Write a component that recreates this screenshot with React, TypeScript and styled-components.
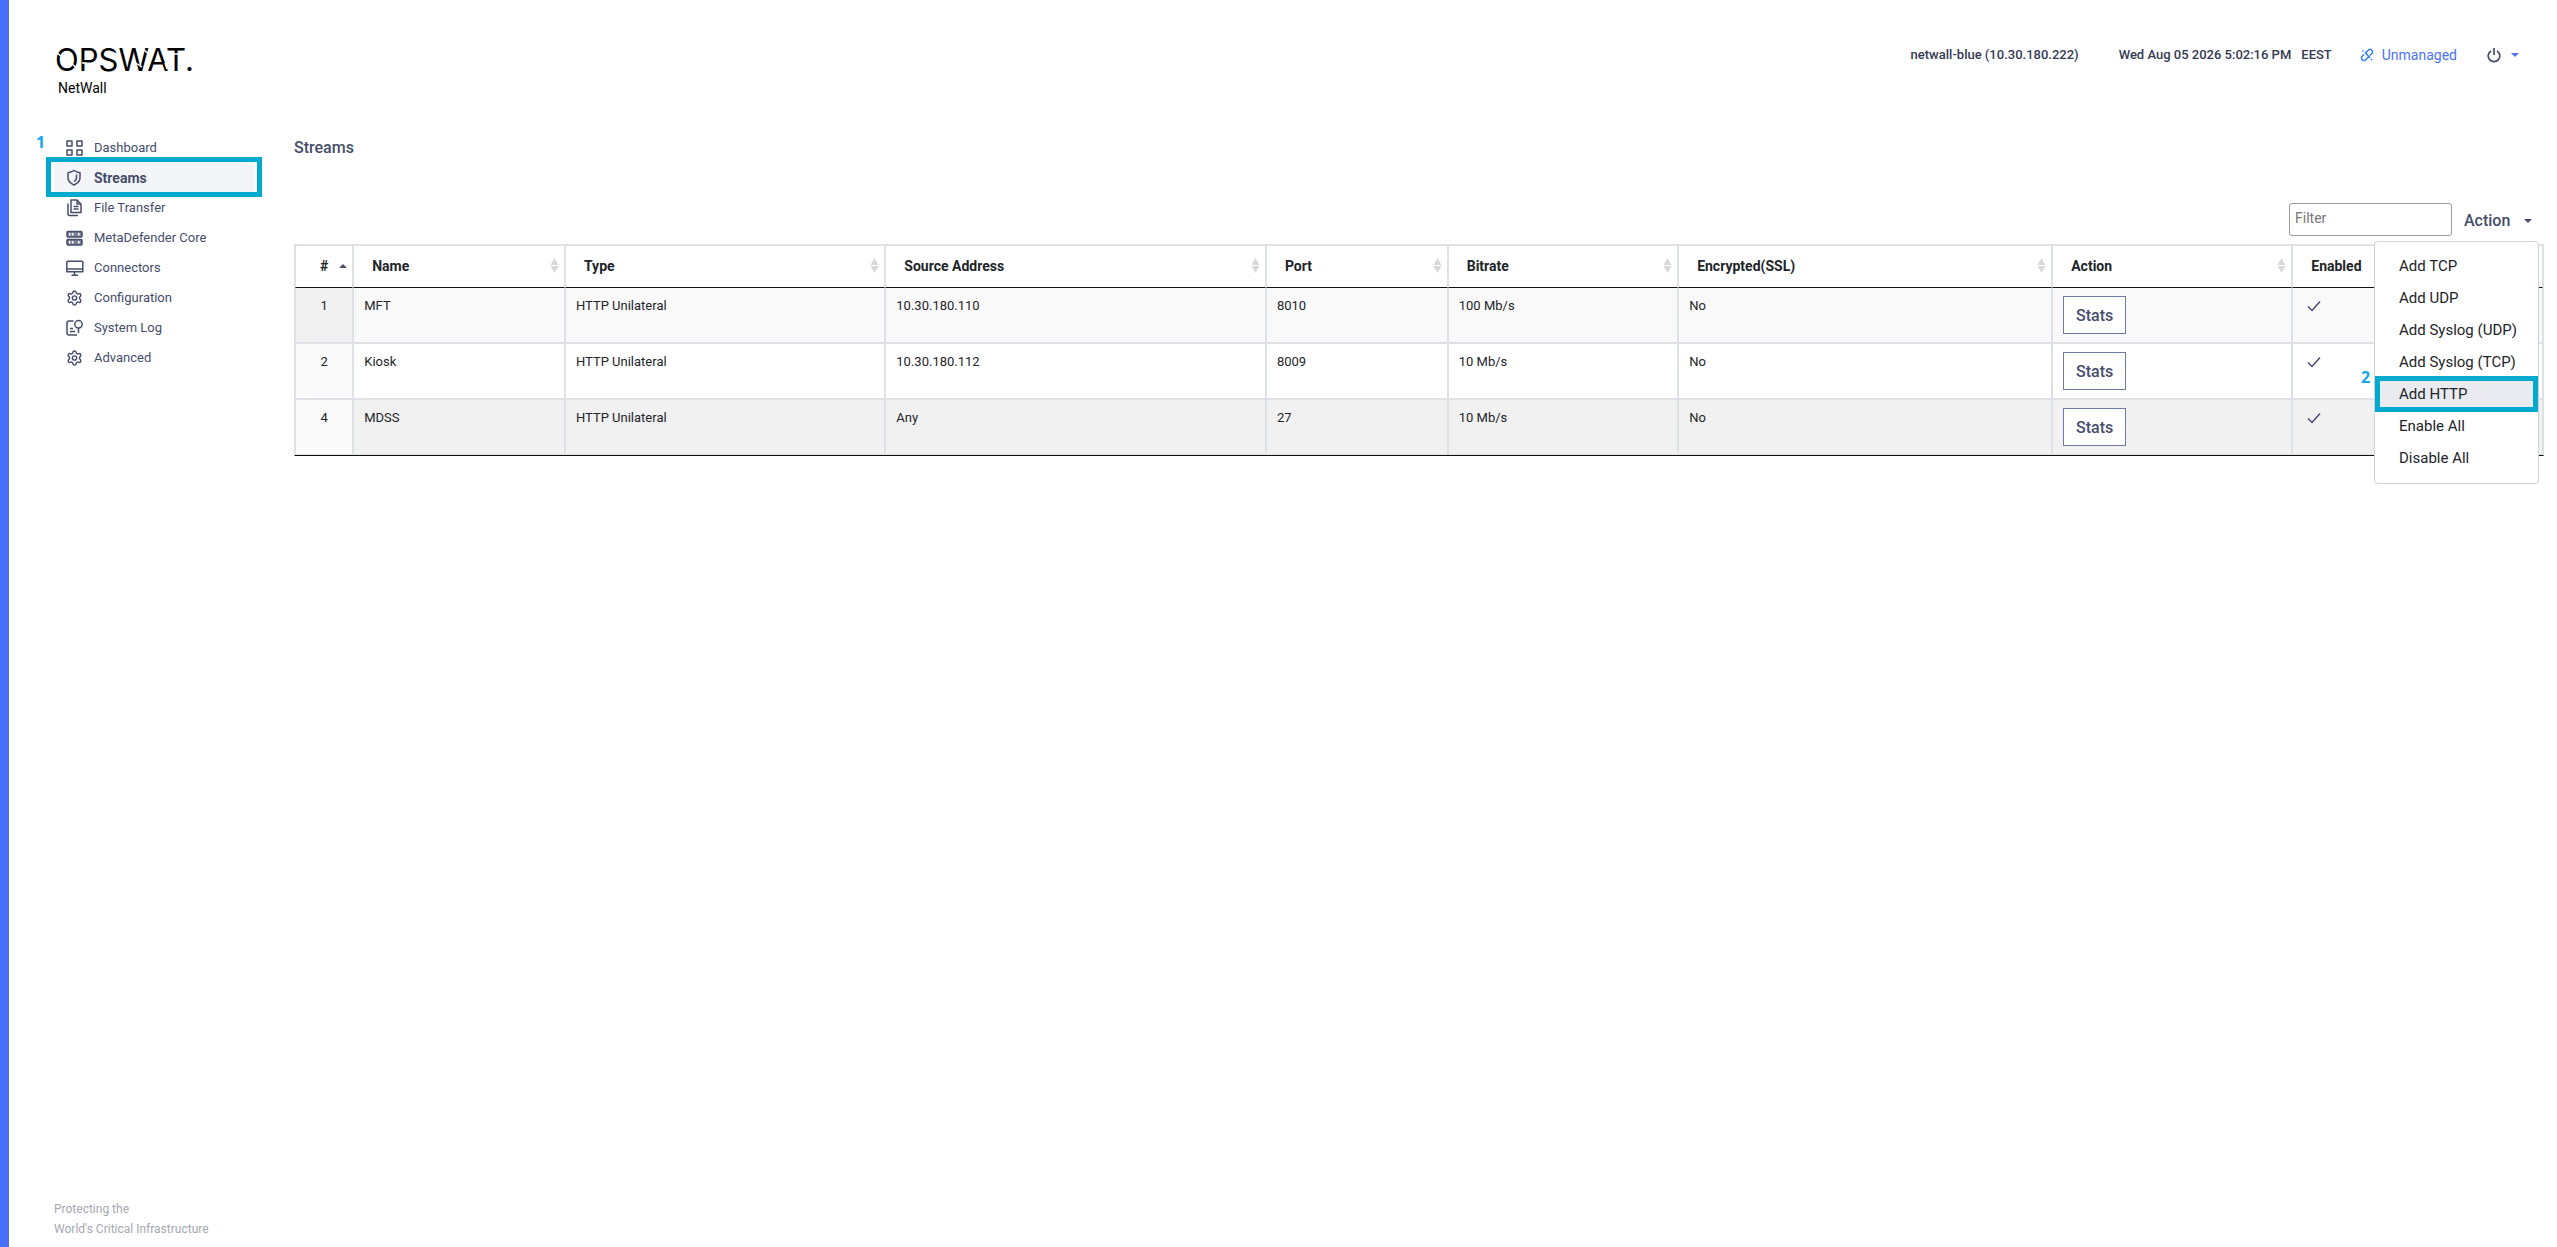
import React from "react";
import styled, { createGlobalStyle } from "styled-components";
import { Settings } from "lucide-react";

const GlobalStyle = createGlobalStyle`
  *, *::before, *::after { box-sizing: border-box; }
  body {
    margin: 0;
    background: #fff;
    color: #212529;
    font-family: Roboto, "Liberation Sans", sans-serif;
    font-size: 13px;
    line-height: 20px;
  }
  button, input { font-family: inherit; }
  ul { list-style: none; margin: 0; padding: 0; }
`;

const ink = "#454d6b";
const callout = "#00a9ce";
const grid = "#dee2e6";

const Page = styled.div`
  display: flex;
  flex-direction: column;
  min-height: 100vh;
  border-left: 9px solid #486ff6;
`;

const Header = styled.header`
  display: flex;
  justify-content: space-between;
  align-items: flex-start;
  padding: 41px 38px 0 45px;
  height: 132px;
`;

const Brand = styled.div`
  display: flex;
  flex-direction: column;
  color: #000;
`;

const Product = styled.span`
  padding-left: 4px;
  font-size: 14px;
`;

const Status = styled.div`
  display: flex;
  align-items: center;
  margin-top: 4px;
  color: #343b54;
  font-weight: 500;
`;

const Host = styled.span`
  margin-right: 40px;
`;

const Zone = styled.span`
  margin: 0 28px 0 10px;
`;

const ManagedLink = styled.a`
  display: flex;
  align-items: center;
  gap: 8px;
  margin-right: 30px;
  color: #4a73f3;
  font-size: 14px;
  font-weight: 400;
  text-decoration: none;
`;

const PowerButton = styled.button`
  display: flex;
  align-items: center;
  gap: 10px;
  padding: 0;
  border: 0;
  background: none;
  color: ${ink};
`;

const Columns = styled.div`
  display: flex;
  flex: 1;
`;

const Sidebar = styled.aside`
  display: flex;
  flex-direction: column;
  justify-content: space-between;
  width: 200px;
  margin: 0 40px 0 45px;
  flex: none;
`;

const NavItem = styled.li`
  position: relative;
`;

const NavLink = styled.a<{ $active?: boolean }>`
  display: flex;
  align-items: center;
  gap: 10px;
  height: 30px;
  padding: 1px 0 0 12px;
  color: ${ink};
  background: ${(p) => (p.$active ? "#f4f5f9" : "none")};
  font-size: ${(p) => (p.$active ? 14 : 13)}px;
  font-weight: ${(p) => (p.$active ? 700 : 400)};
  text-decoration: none;
`;

const Highlight = styled.span<{ $x: number; $y: number }>`
  position: absolute;
  inset: ${(p) => `${-p.$y}px ${-p.$x}px`};
  border: 5px solid ${callout};
  pointer-events: none;
`;

const Marker = styled.span<{ $left: number; $top: number }>`
  position: absolute;
  left: ${(p) => p.$left}px;
  top: ${(p) => p.$top}px;
  color: #12a6ee;
  font: 700 16px/20px "Noto Sans", sans-serif;
`;

const Footer = styled.footer`
  padding-bottom: 8px;
  color: #a5a7b2;
  font-size: 12px;
  white-space: nowrap;
`;

const Main = styled.main`
  flex: 1;
  min-width: 0;
  padding-right: 13px;
`;

const Title = styled.h1`
  margin: 6px 0 45px;
  color: ${ink};
  font-size: 16px;
  line-height: 20px;
  font-weight: 500;
`;

const Toolbar = styled.div`
  display: flex;
  justify-content: flex-end;
  align-items: center;
  gap: 12px;
  height: 33px;
  margin-bottom: 8px;
`;

const Filter = styled.input`
  width: 163px;
  height: 33px;
  padding: 0 5px 3px;
  border: 1px solid #9b9b9b;
  border-radius: 3px;
  font-size: 14px;
  &::placeholder { color: #777; opacity: 1; }
`;

const MenuHolder = styled.div`
  position: relative;
  width: 80px;
`;

const MenuButton = styled.button`
  display: flex;
  align-items: center;
  gap: 14px;
  padding: 2px 0 0;
  border: 0;
  background: none;
  color: ${ink};
  font-size: 16px;
  line-height: 20px;
  font-weight: 500;
`;

const Menu = styled.ul`
  position: absolute;
  z-index: 2;
  top: 32px;
  right: 5px;
  width: 165px;
  && { padding: 8px 0 9px; }
  border: 1px solid #d0d2d5;
  border-radius: 4px;
  background: #fff;
`;

const MenuEntry = styled.li`
  position: relative;
`;

const MenuAction = styled.button<{ $active?: boolean }>`
  display: block;
  width: 100%;
  height: 32px;
  padding: 0 24px;
  border: 0;
  background: ${(p) => (p.$active ? "#e9ebf0" : "none")};
  color: #212529;
  font-size: 15px;
  text-align: left;
  white-space: nowrap;
`;

const Table = styled.table`
  width: 100%;
  table-layout: fixed;
  border: 1px solid ${grid};
  border-bottom-color: #111;
  border-collapse: separate;
  border-spacing: 0;
`;

const Th = styled.th`
  height: 43px;
  padding: 0 5px 2px 18px;
  border: 1px solid ${grid};
  border-bottom-color: #111;
  text-align: left;
  font-size: 14px;
  font-weight: 700;
  &:first-child { padding-left: 24px; }
`;

const HeadLabel = styled.div`
  display: flex;
  align-items: center;
  justify-content: space-between;
`;

const Row = styled.tr<{ $bg: string; $keyBg: string }>`
  background: ${(p) => p.$bg};
  td:first-child {
    background: ${(p) => p.$keyBg};
    text-align: center;
  }
  &:first-child td { border-top: 0; }
`;

const Td = styled.td`
  padding: 8px 10px;
  border: 1px solid ${grid};
  vertical-align: top;
`;

const StatsButton = styled.button`
  display: block;
  width: 63px;
  height: 38px;
  padding: 0;
  border: 1px solid #6f7aa3;
  background: #fff;
  color: ${ink};
  font-size: 16px;
  font-weight: 500;
`;

const Caret = ({ color = ink, up = false }: { color?: string; up?: boolean }) => (
  <svg width="8" height="4" viewBox="0 0 8 4" aria-hidden="true">
    <path d={up ? "M4 0 8 4H0Z" : "M0 0h8L4 4Z"} fill={color} />
  </svg>
);

const SortIcon = () => (
  <svg width="9" height="15" viewBox="0 0 9 15" aria-hidden="true">
    <path d="M4.500 0 8.500 7h-8ZM.5 8h8L4.500 15Z" fill="#d8d8d8" />
  </svg>
);

const Check = () => (
  <svg width="20" height="20" viewBox="0 0 20 20" fill="none" stroke={ink} strokeWidth="1.500" role="img" aria-label="Enabled">
    <path d="m5 10.500 4 4L17 5.500" />
  </svg>
);

const Wordmark = () => (
  <svg width="150" height="37" viewBox="0 0 150 37" role="img" aria-label="OPSWAT">
    <text x="1" y="30" fontFamily="Inter, sans-serif" fontSize="31" fontWeight="400" fill="#000">OPSWAT.</text>
    <g stroke="#fff" strokeWidth="1.500">
      <path d="m2 11 6 5M18 23l6 5M28 22h5M58 11l6 3M48 24l5-2M90 9l6 5M82 22l6 4M111 22l2 6M118 13h14" />
    </g>
  </svg>
);

const icons: Record<string, React.ReactNode> = {
  dashboard: (
    <path d="M1 2h5v5H1zM11 2h5v5h-5zM1 11h5v5H1zM11 11h5v5h-5z" />
  ),
  shield: (
    <>
      <path d="M8 1.500c2 1.500 4 2 6 2.200V9c0 3.200-3 5.500-6 7-3-1.500-6-3.800-6-7V3.700c2-.2 4-.7 6-2.200Z" />
      <path d="M10.500 5.500v3.500c0 1.500-1 2.700-2.300 3.700" />
    </>
  ),
  files: (
    <>
      <path d="M5 1h6l4 4v8.500H5zM11 1v4h4M7.500 7.500h5M7.500 10h5M2 4.500V15q0 1.500 1.500 1.500H12" />
    </>
  ),
  server: (
    <>
      <rect x="1" y="2.500" width="15" height="5.500" rx="1" fill={ink} fillOpacity=".7" />
      <rect x="1" y="10.500" width="15" height="5.500" rx="1" fill={ink} fillOpacity=".7" />
      <path d="M3 5.200h1.500M6 5.200h1.500M12 5.200h1.500M3 13.200h1.500M6 13.200h1.500M12 13.200h1.500" stroke="#fff" strokeWidth="2.500" />
    </>
  ),
  monitor: <path d="M1.800 2.300h14q1 0 1 1v9.500h-16V3.300q0-1 1-1ZM1 10h16M8.500 13v3.500M5.500 16.300h6.500" />,
  log: (
    <>
      <path d="M7.500 2H3Q1 2 1 4v10q0 2 2 2h8M4 9.500h3M4 12.500h5" />
      <circle cx="12.500" cy="5.300" r="3.700" />
      <path d="M12.500 9v5" />
    </>
  ),
};

const GearIcon = styled(Settings)`
  width: 18px;
  height: 18px;
  padding-right: 1px;
  color: ${ink};
`;

const NavIcon = ({ name }: { name: string }) =>
  name === "gear" ? (
    <GearIcon aria-hidden="true" />
  ) : (
    <svg width="18" height="18" viewBox="0 0 18 18" fill="none" stroke={ink} strokeWidth="1.500" strokeLinejoin="round" aria-hidden="true">
      {icons[name]}
    </svg>
  );

const BrokenLink = () => (
  <svg width="14" height="14" viewBox="0 0 14 14" fill="none" stroke="#2f80f7" strokeWidth="1.500" aria-hidden="true">
    <path d="M5 5.500 8.300 2.200a2.400 2.400 0 0 1 3.500 3.500L10 7.500M9 8.500 5.700 11.800a2.400 2.400 0 0 1-3.500-3.500L4 6.500M5 4l5 6M2.500 2.500l1 1M11 11l1 1" />
  </svg>
);

const PowerIcon = () => (
  <svg width="14" height="16" viewBox="0 0 14 16" fill="none" stroke="currentColor" strokeWidth="1.700" aria-hidden="true">
    <path d="M7 1v7M4 3.900a5.800 5.800 0 1 0 6 0" />
  </svg>
);

const nav = [
  ["Dashboard", "dashboard"],
  ["Streams", "shield"],
  ["File Transfer", "files"],
  ["MetaDefender Core", "server"],
  ["Connectors", "monitor"],
  ["Configuration", "gear"],
  ["System Log", "log"],
  ["Advanced", "gear"],
];

const actions = ["Add TCP", "Add UDP", "Add Syslog (UDP)", "Add Syslog (TCP)", "Add HTTP", "Enable All", "Disable All"];

const Col = styled.col<{ $share: number }>`
  width: ${(p) => p.$share}%;
`;

const columns: [string, number][] = [
  ["#", 2.59],
  ["Name", 9.42],
  ["Type", 14.25],
  ["Source Address", 16.93],
  ["Port", 8.09],
  ["Bitrate", 10.25],
  ["Encrypted(SSL)", 16.64],
  ["Action", 10.68],
  ["Enabled", 11.15],
];

const rows = [
  { cells: ["1", "MFT", "HTTP Unilateral", "10.30.180.110", "8010", "100 Mb/s", "No"], bg: "#f9f9f9", keyBg: "#f1f1f1" },
  { cells: ["2", "Kiosk", "HTTP Unilateral", "10.30.180.112", "8009", "10 Mb/s", "No"], bg: "#fff", keyBg: "#fafafa" },
  { cells: ["4", "MDSS", "HTTP Unilateral", "Any", "27", "10 Mb/s", "No"], bg: "#f1f1f1", keyBg: "#fafafa" },
];

export default function App() {
  return (
    <Page>
      <GlobalStyle />
      <Header>
        <Brand>
          <Wordmark />
          <Product>NetWall</Product>
        </Brand>
        <Status>
          <Host>netwall-blue (10.30.180.222)</Host>
          <span>Wed Aug 05 2026 5:02:16 PM</span>
          <Zone>EEST</Zone>
          <ManagedLink href="#managed">
            <BrokenLink />
            Unmanaged
          </ManagedLink>
          <PowerButton type="button" aria-label="Power">
            <PowerIcon />
            <Caret color="#4a73f3" />
          </PowerButton>
        </Status>
      </Header>
      <Columns>
        <Sidebar>
          <nav>
            <ul>
              {nav.map(([label, icon]) => (
                <NavItem key={label}>
                  <NavLink href={`#${icon}`} $active={label === "Streams"}>
                    <NavIcon name={icon} />
                    {label}
                  </NavLink>
                  {label === "Dashboard" && <Marker $left={-18} $top={0}>1</Marker>}
                  {label === "Streams" && <Highlight $x={8} $y={5} />}
                </NavItem>
              ))}
            </ul>
          </nav>
          <Footer>
            Protecting the
            <br />
            World's Critical Infrastructure
          </Footer>
        </Sidebar>
        <Main>
          <Title>Streams</Title>
          <Toolbar>
            <Filter type="text" placeholder="Filter" aria-label="Filter" />
            <MenuHolder>
              <MenuButton type="button">
                Action
                <Caret />
              </MenuButton>
              <Menu>
                {actions.map((label) => (
                  <MenuEntry key={label}>
                    <MenuAction type="button" $active={label === "Add HTTP"}>{label}</MenuAction>
                    {label === "Add HTTP" && (
                      <>
                        <Highlight $x={0} $y={2} />
                        <Marker $left={-14} $top={-11}>2</Marker>
                      </>
                    )}
                  </MenuEntry>
                ))}
              </Menu>
            </MenuHolder>
          </Toolbar>
          <Table>
            <colgroup>
              {columns.map(([label, share]) => (
                <Col key={label} $share={share} />
              ))}
            </colgroup>
            <thead>
              <tr>
                {columns.map(([label], i) => (
                  <Th key={label} scope="col">
                    <HeadLabel>
                      {label}
                      {i === 0 ? <Caret up /> : <SortIcon />}
                    </HeadLabel>
                  </Th>
                ))}
              </tr>
            </thead>
            <tbody>
              {rows.map((row) => (
                <Row key={row.cells[0]} $bg={row.bg} $keyBg={row.keyBg}>
                  {row.cells.map((cell, i) => (
                    <Td key={i}>{cell}</Td>
                  ))}
                  <Td>
                    <StatsButton type="button">Stats</StatsButton>
                  </Td>
                  <Td>
                    <Check />
                  </Td>
                </Row>
              ))}
            </tbody>
          </Table>
        </Main>
      </Columns>
    </Page>
  );
}
